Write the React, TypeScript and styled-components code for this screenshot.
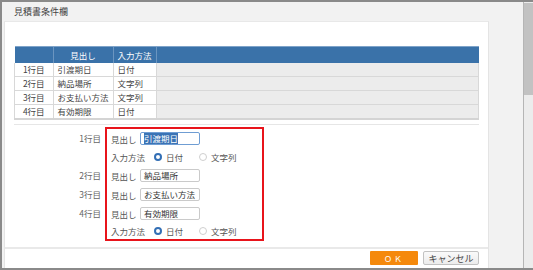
import styled, { createGlobalStyle } from "styled-components";

const GlobalStyle = createGlobalStyle`
  html, body {
    margin: 0;
    padding: 0;
    background: #ffffff;
  }
  body {
    font-family: "Noto Sans CJK JP", "Noto Sans", sans-serif;
    font-size: 8.5px;
    color: #444;
  }
`;

interface Heading {
  row: string;
  title: string;
  method: string;
}

const headings: Heading[] = [
  { row: "1行目", title: "引渡期日", method: "日付" },
  { row: "2行目", title: "納品場所", method: "文字列" },
  { row: "3行目", title: "お支払い方法", method: "文字列" },
  { row: "4行目", title: "有効期限", method: "日付" },
];

export default function App() {
  return (
    <>
      <GlobalStyle />
      <Page>
        <Frame>
          <TitleBar>見積書条件欄</TitleBar>
          <Body>
            <Column>
              <Panel>
                <HeadTable />
                <Divider />
                <Form />
              </Panel>
              <FooterLine />
              <Footer>
                <OkButton>ＯＫ</OkButton>
                <CancelButton>キャンセル</CancelButton>
              </Footer>
            </Column>
          </Body>
        </Frame>
        <Scrollbar>
          <Thumb />
        </Scrollbar>
      </Page>
    </>
  );
}

const Page = styled.div`
  width: 533px;
  height: 270px;
  box-sizing: border-box;
  display: flex;
  border-top: 2px solid #8a8a8a;
  border-bottom: 2px solid #8a8a8a;
  border-left: 2px solid #8a8a8a;
  background: #f2f2f2;
`;

const Frame = styled.div`
  flex: 1;
  display: flex;
  flex-direction: column;
`;

const TitleBar = styled.div`
  height: 19px;
  line-height: 19px;
  padding-left: 12px;
  color: #444;
  font-size: 9px;
`;

const Body = styled.div`
  flex: 1;
  display: flex;
`;

const Column = styled.div`
  width: 483px;
  margin-left: 2px;
  border-left: 1px solid #e4e4e4;
  border-right: 1px solid #e4e4e4;
  border-top: 1px solid #e8e8e8;
  background: #fff;
  display: flex;
  flex-direction: column;
`;

const Panel = styled.div`
  height: 225px;
  padding: 24px 9px 0 9px;
  box-sizing: border-box;
`;

const FooterLine = styled.div`
  height: 2px;
  background: #e9e9e9;
`;

const Footer = styled.div`
  flex: 1;
  display: flex;
  justify-content: flex-end;
  align-items: flex-start;
  gap: 5px;
  padding: 2px 9px 0 0;
`;

const OkButton = styled.button`
  width: 48px;
  height: 14px;
  border: 0;
  border-radius: 1px;
  background: #f5890c;
  color: #fff;
  font: inherit;
  font-size: 8px;
  letter-spacing: 2px;
  padding: 0;
`;

const CancelButton = styled.button`
  width: 56px;
  height: 14px;
  border: 1px solid #c2c2c2;
  border-radius: 2px;
  background: linear-gradient(#fafafa, #ececec);
  color: #444;
  font: inherit;
  font-size: 9px;
  padding: 0;
`;

const Scrollbar = styled.div`
  width: 9px;
  border-left: 1px solid #b5b5b5;
  background: #ececec;
  padding-top: 1px;
`;

const Thumb = styled.div`
  height: 92px;
  background: #c2c2c2;
`;

/* ---- table ---- */

const Table = styled.table`
  width: 465px;
  border-collapse: collapse;
  table-layout: fixed;
  border-bottom: 2px solid #d4d4d4;
`;

const HeadCell = styled.th<{ $w?: number }>`
  width: ${(p) => (p.$w ? `${p.$w}px` : "auto")};
  height: 16px;
  padding: 0;
  background: #3a72a9;
  color: #fff;
  font-weight: normal;
  text-align: center;
  border-left: 1px solid #6b95c0;
  border-top: 1px solid #7ea3c9;
  &:first-child {
    border-left: 0;
  }
`;

const Cell = styled.td<{ $align?: string; $blank?: boolean }>`
  height: 13px;
  padding: 0 0 0 4px;
  line-height: 13px;
  text-align: ${(p) => p.$align || "left"};
  border: 1px solid #d8d8d8;
  border-top: 0;
  background: ${(p) => (p.$blank ? "#ececec" : "#fff")};
  white-space: nowrap;
  overflow: hidden;
  &:first-child {
    padding: 0;
  }
`;

const HeadTable = () => (
  <Table>
    <thead>
      <tr>
        <HeadCell $w={38} />
        <HeadCell $w={59}>見出し</HeadCell>
        <HeadCell $w={42}>入力方法</HeadCell>
        <HeadCell />
      </tr>
    </thead>
    <tbody>
      {headings.map((h) => (
        <tr key={h.row}>
          <Cell $align="center">{h.row}</Cell>
          <Cell>{h.title}</Cell>
          <Cell>{h.method}</Cell>
          <Cell $blank />
        </tr>
      ))}
    </tbody>
  </Table>
);

const Divider = styled.div`
  height: 1px;
  background: #e6e6e6;
  margin: 4px 0 2px 0;
`;

/* ---- form ---- */

const FormWrap = styled.div`
  display: flex;
`;

const RowLabels = styled.div`
  width: 91px;
  padding-top: 2px;
  display: flex;
  flex-direction: column;
`;

const RowLabel = styled.div<{ $h: number }>`
  height: ${(p) => p.$h}px;
  line-height: 19px;
  text-align: right;
  padding-right: 4px;
  color: #666;
`;

const RedBox = styled.div`
  width: 151px;
  border: 2px solid #e8141b;
  padding: 0 0 0 4px;
  display: flex;
  flex-direction: column;
`;

const FieldRow = styled.div`
  height: 19px;
  display: flex;
  align-items: center;
`;

const RadioRow = styled.div<{ $h: number }>`
  height: ${(p) => p.$h}px;
  display: flex;
  align-items: center;
`;

const FieldLabel = styled.span<{ $w: number }>`
  width: ${(p) => p.$w}px;
  color: #555;
`;

const TextBox = styled.div<{ $focus?: boolean }>`
  width: 60px;
  height: 13px;
  box-sizing: border-box;
  border: 1px solid ${(p) => (p.$focus ? "#6f9dd3" : "#cacaca")};
  border-radius: 2px;
  padding-left: 3px;
  line-height: 11px;
  color: #333;
  white-space: nowrap;
  overflow: hidden;
`;

const Selected = styled.span`
  background: #3a73b5;
  color: #fff;
`;

const RadioItem = styled.span`
  display: flex;
  align-items: center;
  gap: 4px;
  color: #555;
`;

const RadioDot = styled.span<{ $on?: boolean }>`
  width: 8px;
  height: 8px;
  box-sizing: border-box;
  border-radius: 50%;
  border: ${(p) => (p.$on ? "2.5px solid #336fb5" : "1px solid #cfcfcf")};
  background: #fff;
`;

const MethodRow = ({ h }: { h: number }) => (
  <RadioRow $h={h}>
    <FieldLabel $w={43}>入力方法</FieldLabel>
    <RadioItem style={{ width: 45 }}>
      <RadioDot $on />
      日付
    </RadioItem>
    <RadioItem>
      <RadioDot />
      文字列
    </RadioItem>
  </RadioRow>
);

const Form = () => (
  <FormWrap>
    <RowLabels>
      <RowLabel $h={37}>1行目</RowLabel>
      <RowLabel $h={19}>2行目</RowLabel>
      <RowLabel $h={19}>3行目</RowLabel>
      <RowLabel $h={19}>4行目</RowLabel>
    </RowLabels>
    <RedBox>
      <FieldRow>
        <FieldLabel $w={29}>見出し</FieldLabel>
        <TextBox $focus>
          <Selected>{headings[0].title}</Selected>
        </TextBox>
      </FieldRow>
      <MethodRow h={18} />
      {headings.slice(1).map((h) => (
        <FieldRow key={h.row}>
          <FieldLabel $w={29}>見出し</FieldLabel>
          <TextBox>{h.title}</TextBox>
        </FieldRow>
      ))}
      <MethodRow h={16} />
    </RedBox>
  </FormWrap>
);
